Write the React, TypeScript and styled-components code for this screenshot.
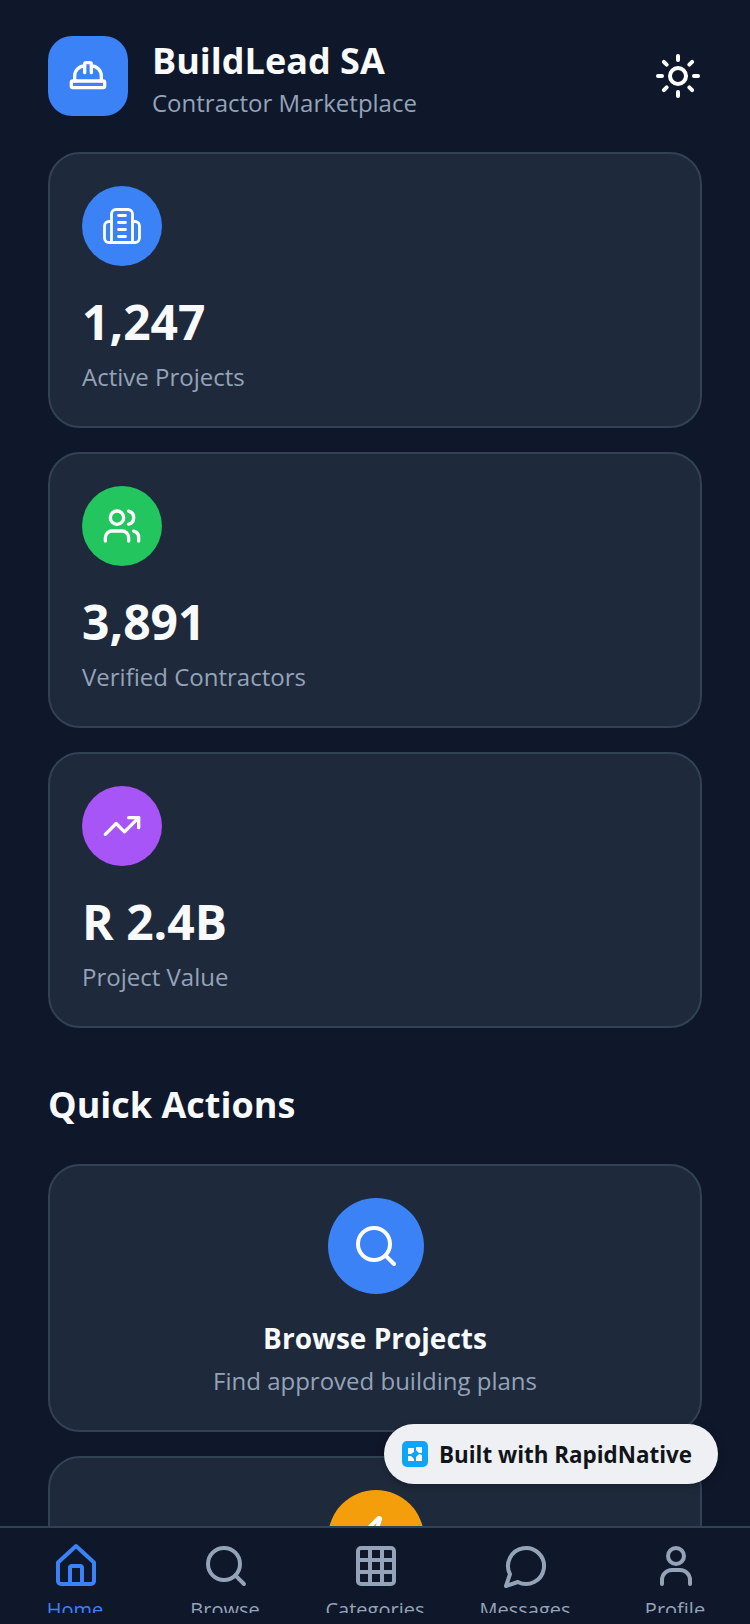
import styled, { createGlobalStyle } from 'styled-components';
import { HardHat, Sun, Users, TrendingUp, Search, Zap } from 'lucide-react';

const GlobalStyle = createGlobalStyle`
  html, body {
    margin: 0;
    padding: 0;
    background: #0f172a;
  }
  * {
    box-sizing: border-box;
  }
`;

function BuildingIcon() {
  return (
    <svg width="48" height="48" viewBox="0 0 48 48" fill="none" stroke="#fff" strokeWidth="2.800" strokeLinecap="round" strokeLinejoin="round">
      <path d="M13.500 40.500V12a4.500 4.500 0 0 1 4.500-4.500h12a4.500 4.500 0 0 1 4.500 4.500v28.500" />
      <path d="M13.500 19.500H11a4.500 4.500 0 0 0-4.500 4.500v12a4.500 4.500 0 0 0 4.500 4.500h26a4.500 4.500 0 0 0 4.500-4.500V24a4.500 4.500 0 0 0-4.500-4.500h-2.500" />
      <path d="M20.500 13.500h7M20.500 20.500h7M20.500 27.500h7M20.500 34.500h7" />
    </svg>
  );
}

function HomeIcon() {
  return (
    <svg width="48" height="48" viewBox="0 0 48 48" fill="none" stroke="#3b82f6" strokeWidth="4" strokeLinecap="round" strokeLinejoin="round">
      <path d="M6 20.500 24 4l18 16.500V39a3 3 0 0 1-3 3H9a3 3 0 0 1-3-3Z" />
      <path d="M18 42V26a2 2 0 0 1 2-2h8a2 2 0 0 1 2 2v16" />
    </svg>
  );
}

function GridIcon() {
  return (
    <svg width="48" height="48" viewBox="0 0 48 48" fill="none" stroke="#94a3b8" strokeWidth="4" strokeLinecap="round" strokeLinejoin="round">
      <rect x="6" y="6" width="36" height="36" rx="3" />
      <path d="M6 18h36M6 30h36M18 6v36M30 6v36" />
    </svg>
  );
}

function MessageIcon() {
  return (
    <svg width="48" height="48" viewBox="0 0 24 24" fill="none" stroke="#94a3b8" strokeWidth="2" strokeLinecap="round" strokeLinejoin="round">
      <path d="M7.900 20A9 9 0 1 0 4 16.100L2 22Z" />
    </svg>
  );
}

function ProfileIcon() {
  return (
    <svg width="48" height="48" viewBox="0 0 48 48" fill="none" stroke="#94a3b8" strokeWidth="4" strokeLinecap="round" strokeLinejoin="round">
      <circle cx="24" cy="14" r="8" />
      <path d="M10 42v-4a10 10 0 0 1 10-10h8a10 10 0 0 1 10 10v4" />
    </svg>
  );
}

function RapidLogo() {
  return (
    <svg width="26" height="26" viewBox="0 0 26 26">
      <rect width="26" height="26" rx="5" fill="#0ea5ff" />
      <path d="M6 7h6v4l-3 2H6ZM14 6h6v6h-3l-3-3ZM6 15h3l3 3v2H6ZM17 13l3 1v6h-6v-4Z" fill="#fff" />
    </svg>
  );
}

const stats = [
  { value: '1,247', label: 'Active Projects', color: '#3b82f6', icon: <BuildingIcon /> },
  { value: '3,891', label: 'Verified Contractors', color: '#22c55e', icon: <Users size={40} color="#fff" strokeWidth={2} /> },
  { value: 'R 2.4B', label: 'Project Value', color: '#a855f7', icon: <TrendingUp size={40} color="#fff" strokeWidth={2} /> },
];

const tabs = [
  { label: 'Home', icon: <HomeIcon />, active: true },
  { label: 'Browse', icon: <Search size={48} color="#94a3b8" strokeWidth={2} />, active: false },
  { label: 'Categories', icon: <GridIcon />, active: false },
  { label: 'Messages', icon: <MessageIcon />, active: false },
  { label: 'Profile', icon: <ProfileIcon />, active: false },
];

export default function App() {
  return (
    <StyledPhone>
      <GlobalStyle />
      <StyledContent>
        <StyledHeader>
          <StyledBrand>
            <StyledLogo>
              <HardHat size={40} color="#fff" strokeWidth={2} />
            </StyledLogo>
            <div>
              <StyledTitle>BuildLead SA</StyledTitle>
              <StyledSubtitle>Contractor Marketplace</StyledSubtitle>
            </div>
          </StyledBrand>
          <Sun size={48} color="#fff" strokeWidth={2} />
        </StyledHeader>

        <StyledStats>
          {stats.map((stat) => (
            <StyledCard key={stat.label}>
              <StyledCircle $color={stat.color} $size={80}>
                {stat.icon}
              </StyledCircle>
              <StyledValue>{stat.value}</StyledValue>
              <StyledLabel>{stat.label}</StyledLabel>
            </StyledCard>
          ))}
        </StyledStats>

        <StyledSectionTitle>Quick Actions</StyledSectionTitle>

        <StyledActions>
          <StyledActionCard>
            <StyledActionCircle $color="#3b82f6" $size={96}>
              <Search size={48} color="#fff" strokeWidth={2} />
            </StyledActionCircle>
            <StyledActionTitle>Browse Projects</StyledActionTitle>
            <StyledActionText>Find approved building plans</StyledActionText>
          </StyledActionCard>
          <StyledActionCard>
            <StyledActionCircle $color="#f59e0b" $size={96}>
              <Zap size={48} color="#fff" strokeWidth={2} />
            </StyledActionCircle>
          </StyledActionCard>
        </StyledActions>
      </StyledContent>

      <StyledBadge>
        <RapidLogo />
        <StyledBadgeText>Built with RapidNative</StyledBadgeText>
      </StyledBadge>

      <StyledNav>
        {tabs.map((tab) => (
          <StyledTab key={tab.label}>
            {tab.icon}
            <StyledTabLabel $active={tab.active}>{tab.label}</StyledTabLabel>
          </StyledTab>
        ))}
      </StyledNav>
    </StyledPhone>
  );
}

const StyledPhone = styled.div`
  position: relative;
  width: 750px;
  height: 1624px;
  display: flex;
  flex-direction: column;
  overflow: hidden;
  background-color: #0f172a;
  font-family: 'Open Sans', 'Noto Sans', sans-serif;
`;

const StyledContent = styled.main`
  flex: 1;
  min-height: 0;
  overflow: hidden;
  padding: 36px 48px 0;
`;

const StyledHeader = styled.header`
  display: flex;
  justify-content: space-between;
  align-items: center;
  margin-bottom: 36px;
`;

const StyledBrand = styled.div`
  display: flex;
  align-items: center;
  gap: 24px;
`;

const StyledLogo = styled.div`
  width: 80px;
  height: 80px;
  border-radius: 24px;
  display: flex;
  justify-content: center;
  align-items: center;
  background-color: #3b82f6;
`;

const StyledTitle = styled.h1`
  margin: 0;
  font-size: 36px;
  line-height: 50px;
  font-weight: 700;
  color: #f8fafc;
`;

const StyledSubtitle = styled.p`
  margin: 4px 0 0;
  font-size: 24px;
  line-height: 26px;
  color: #94a3b8;
`;

const StyledStats = styled.section`
  display: flex;
  flex-direction: column;
  gap: 24px;
`;

const StyledCard = styled.div`
  padding: 32px;
  border: 2px solid #334155;
  border-radius: 32px;
  background-color: #1e293b;
`;

const StyledCircle = styled.div<{ $color: string; $size: number }>`
  width: ${(p) => p.$size}px;
  height: ${(p) => p.$size}px;
  border-radius: 50%;
  display: flex;
  justify-content: center;
  align-items: center;
  flex-shrink: 0;
  background-color: ${(p) => p.$color};
`;

const StyledActionCircle = styled(StyledCircle)`
  margin-left: 2px;
`;

const StyledValue = styled.div`
  margin-top: 24px;
  font-size: 48px;
  line-height: 64px;
  font-weight: 700;
  color: #f8fafc;
`;

const StyledLabel = styled.div`
  margin: 8px 0 2px;
  font-size: 24px;
  line-height: 30px;
  color: #94a3b8;
`;

const StyledSectionTitle = styled.h2`
  margin: 53px 0 35px;
  font-size: 36px;
  line-height: 48px;
  font-weight: 700;
  color: #f8fafc;
`;

const StyledActions = styled.section`
  display: flex;
  flex-direction: column;
  gap: 24px;
`;

const StyledActionCard = styled.div`
  display: flex;
  flex-direction: column;
  align-items: center;
  padding: 32px;
  border: 2px solid #334155;
  border-radius: 32px;
  background-color: #1e293b;
`;

const StyledActionTitle = styled.div`
  margin-top: 24px;
  font-size: 28px;
  line-height: 40px;
  font-weight: 700;
  color: #f8fafc;
`;

const StyledActionText = styled.div`
  margin: 8px 0 2px;
  font-size: 24px;
  line-height: 30px;
  color: #94a3b8;
`;

const StyledBadge = styled.div`
  position: absolute;
  left: 384px;
  top: 1424px;
  width: 334px;
  height: 60px;
  display: flex;
  align-items: center;
  gap: 11px;
  padding-left: 18px;
  border-radius: 30px;
  background-color: #eef0f4;
  box-shadow: 0 2px 8px rgba(0, 0, 0, 0.25);
`;

const StyledBadgeText = styled.span`
  font-size: 22.4px;
  font-weight: 700;
  color: #111418;
`;

const StyledNav = styled.nav`
  height: 98px;
  flex-shrink: 0;
  display: flex;
  justify-content: space-between;
  padding: 14px 0 11px;
  border-top: 2px solid #334155;
  background-color: #0f172a;
`;

const StyledTab = styled.div`
  flex: 1;
  display: flex;
  flex-direction: column;
  align-items: center;
  overflow: hidden;

  svg {
    flex-shrink: 0;
    margin-left: 2px;
  }
`;

const StyledTabLabel = styled.span<{ $active: boolean }>`
  margin-top: 6px;
  font-size: 20px;
  line-height: 28px;
  white-space: nowrap;
  color: ${(p) => (p.$active ? '#3b82f6' : '#94a3b8')};
`;
